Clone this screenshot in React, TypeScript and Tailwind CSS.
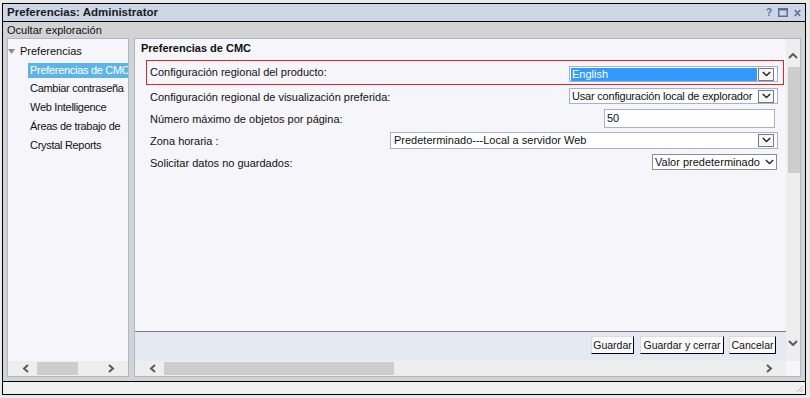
import React from 'react';

type Dir = 'left' | 'right' | 'up' | 'down';

const CHEVRONS: Record<Dir, string> = {
  left: 'M6 1 L2 4.5 L6 8',
  right: 'M2 1 L6 4.5 L2 8',
  up: 'M1 5 L5 1 L9 5',
  down: 'M1 1 L5 5 L9 1',
};

function ScrollArrow({ dir }: { dir: Dir }) {
  const horizontal = dir === 'left' || dir === 'right';
  return (
    <svg width={horizontal ? 8 : 10} height={horizontal ? 9 : 6} viewBox={horizontal ? '0 0 8 9' : '0 0 10 6'} className="shrink-0">
      <path d={CHEVRONS[dir]} fill="none" stroke="#5a5a5a" strokeWidth={2} />
    </svg>
  );
}

function DropChevron() {
  return (
    <svg width="9" height="6" viewBox="0 0 9 6" className="shrink-0">
      <path d="M0.8 1 L4.5 4.6 L8.2 1" fill="none" stroke="#222" strokeWidth={1.4} />
    </svg>
  );
}

function DropButton() {
  return (
    <div className="ml-[1px] w-[16px] h-[13px] shrink-0 border border-[#7b7b7b] bg-[#f7f7f7] flex items-center justify-center">
      <DropChevron />
    </div>
  );
}

function HScroll({ thumb }: { thumb: string }) {
  return (
    <div className="h-[15px] shrink-0 bg-[#eeeeee] flex items-center pl-[14px] pr-[13px]">
      <ScrollArrow dir="left" />
      <div className={thumb} />
      <div className="ml-auto">
        <ScrollArrow dir="right" />
      </div>
    </div>
  );
}

const TREE = ['Preferencias de CMC', 'Cambiar contraseña', 'Web Intelligence', 'Áreas de trabajo de', 'Crystal Reports'];

export default function App() {
  return (
    <div className="w-[810px] h-[398px] bg-[#e9e9e9] pt-[3px] pl-[2px] font-['Liberation_Sans',Arial,sans-serif] text-[11px] text-[#111]">
      <div className="w-[804px] h-[392px] border border-black flex flex-col bg-[#d3d3d3]">
        {/* Title bar */}
        <div className="h-[18px] shrink-0 bg-[#ccd6e4] border-b border-black flex items-center pl-[4px] pr-[4px]">
          <span className="font-bold text-[11.5px] text-[#1b1b1b]">Preferencias: Administrator</span>
          <div className="ml-auto flex items-center gap-[6px] text-[#5b7096]">
            <span className="font-bold text-[10px] leading-[10px]">?</span>
            <svg width="10" height="9" viewBox="0 0 10 9">
              <rect x="0.75" y="0.75" width="8.5" height="7.5" fill="none" stroke="#5b7096" strokeWidth={1.5} />
              <rect x="0" y="0" width="10" height="2.5" fill="#5b7096" />
            </svg>
            <svg width="7" height="8" viewBox="0 0 7 8">
              <path d="M0.8 1 L6.2 7 M6.2 1 L0.8 7" stroke="#5b7096" strokeWidth={1.6} />
            </svg>
          </div>
        </div>

        {/* Toggle bar */}
        <div className="h-[16px] shrink-0 flex items-center pl-[4px]">Ocultar exploración</div>

        {/* Panels */}
        <div className="h-[339px] shrink-0 flex px-[4px] gap-[5px]">
          {/* Navigation tree */}
          <div className="w-[122px] shrink-0 border border-[#a8b7d2] bg-[#f5f5fa] flex flex-col overflow-hidden">
            <div className="flex-1 pt-[3px] overflow-hidden whitespace-nowrap">
              <div className="h-[18.7px] flex items-center">
                <svg width="7" height="5" viewBox="0 0 7 5" className="shrink-0">
                  <path d="M0 0 L7 0 L3.5 5 Z" fill="#8a8a8a" />
                </svg>
                <span className="ml-[5px]">Preferencias</span>
              </div>
              {TREE.map((item, idx) => (
                <div key={item} className="h-[18.7px] flex items-center pl-[20px]">
                  <span
                    className={
                      idx === 0
                        ? 'shrink-0 px-[2px] h-[15px] leading-[15px] tracking-[-0.3px] bg-[#5eb3e8] text-white'
                        : 'shrink-0 px-[2px] tracking-[-0.3px]'
                    }
                  >
                    {item}
                  </span>
                </div>
              ))}
            </div>
            <HScroll thumb="ml-[7px] w-[41px] h-[13px] bg-[#cdcdcd]" />
          </div>

          {/* Preferences form */}
          <div className="flex-1 border border-[#a8b7d2] bg-[#f5f5fa] flex">
            <div className="flex-1 min-w-0 flex flex-col">
              <div className="flex-1 flex flex-col">
                <div className="h-[18px] flex items-center pl-[6px] font-bold">Preferencias de CMC</div>

                <div className="mt-[3px] ml-[11px] mr-[2px] h-[25px] border border-[#e0262b] flex items-center pl-[3px] pr-[5px]">
                  <span>Configuración regional del producto:</span>
                  <div className="ml-auto mt-[3px] w-[209px] h-[16px] border border-[#a3b3cf] bg-white flex items-center pl-[1px] pr-[3px]">
                    <span className="flex-1 h-[13px] leading-[13px] bg-[#3399ff] text-white px-[1px]">English</span>
                    <DropButton />
                  </div>
                </div>

                <div className="ml-[11px] mr-[2px] h-[22px] flex items-center pl-[4px] pr-[6px]">
                  <span className="pt-[3px]">Configuración regional de visualización preferida:</span>
                  <div className="ml-auto w-[209px] h-[16px] border border-[#a3b3cf] bg-white flex items-center pl-[2px] pr-[3px]">
                    <span className="flex-1 whitespace-nowrap overflow-hidden leading-[13px] tracking-[-0.2px]">Usar configuración local de explorador</span>
                    <DropButton />
                  </div>
                </div>

                <div className="ml-[11px] mr-[2px] h-[22px] flex items-center pl-[4px] pr-[6px]">
                  <span className="pt-[3px]">Número máximo de objetos por página:</span>
                  <div className="ml-auto mr-[3px] w-[171px] h-[19px] border border-[#a3b3cf] bg-white flex items-center pl-[2px]">50</div>
                </div>

                <div className="ml-[11px] mr-[2px] h-[22px] flex items-center pl-[4px] pr-[6px]">
                  <span className="pt-[3px]">Zona horaria :</span>
                  <div className="ml-auto w-[388px] h-[17px] border border-[#a3b3cf] bg-white flex items-center pl-[3px] pr-[3px]">
                    <span className="flex-1 leading-[13px]">Predeterminado---Local a servidor Web</span>
                    <DropButton />
                  </div>
                </div>

                <div className="ml-[11px] mr-[2px] h-[22px] flex items-center pl-[4px] pr-[6px]">
                  <span className="pt-[3px]">Solicitar datos no guardados:</span>
                  <div className="ml-auto mr-[1px] w-[125px] h-[16px] border border-[#8c8c8c] bg-white flex items-center pl-[2px] pr-[2px]">
                    <span className="flex-1 leading-[13px]">Valor predeterminado</span>
                    <DropChevron />
                  </div>
                </div>

                {/* Action buttons */}
                <div className="mt-auto h-[30px] border-t border-[#7d7d7d] bg-[#e4e9f2] flex items-start justify-end pt-[4px] pr-[10px]">
                  <button className="w-[43px] h-[18px] p-0 text-[10.5px] bg-[#fafafa] border border-[#dcdcdc] border-r-black border-b-black leading-[15px]">Guardar</button>
                  <button className="ml-[6px] w-[84px] h-[18px] p-0 text-[10.5px] bg-[#fafafa] border border-[#dcdcdc] border-r-black border-b-black leading-[15px]">Guardar y cerrar</button>
                  <button className="ml-[5px] w-[47px] h-[18px] p-0 text-[10.5px] bg-[#fafafa] border border-[#dcdcdc] border-r-black border-b-black leading-[15px]">Cancelar</button>
                </div>
              </div>
              <HScroll thumb="ml-[7px] w-[230px] h-[13px] bg-[#cdcdcd]" />
            </div>

            {/* Vertical scrollbar */}
            <div className="w-[14px] shrink-0 flex flex-col">
              <div className="h-[322px] bg-[#eeeeee] flex flex-col items-center pt-[14px] pb-[15px]">
                <ScrollArrow dir="up" />
                <div className="mt-[8px] ml-[1px] w-[12px] h-[106px] bg-[#cdcdcd]" />
                <div className="mt-auto">
                  <ScrollArrow dir="down" />
                </div>
              </div>
            </div>
          </div>
        </div>

        {/* Status bar */}
        <div className="mt-[4px] flex-1 border-t border-black bg-[#f0f0f0] flex items-end justify-end">
          <svg width="8" height="8" viewBox="0 0 8 8" className="mb-[1px] mr-[1px]">
            <path d="M7 1 L1 7 M7 4 L4 7 M7 6.5 L6.5 7" stroke="#b5b5b5" strokeWidth={1} />
          </svg>
        </div>
      </div>
    </div>
  );
}
